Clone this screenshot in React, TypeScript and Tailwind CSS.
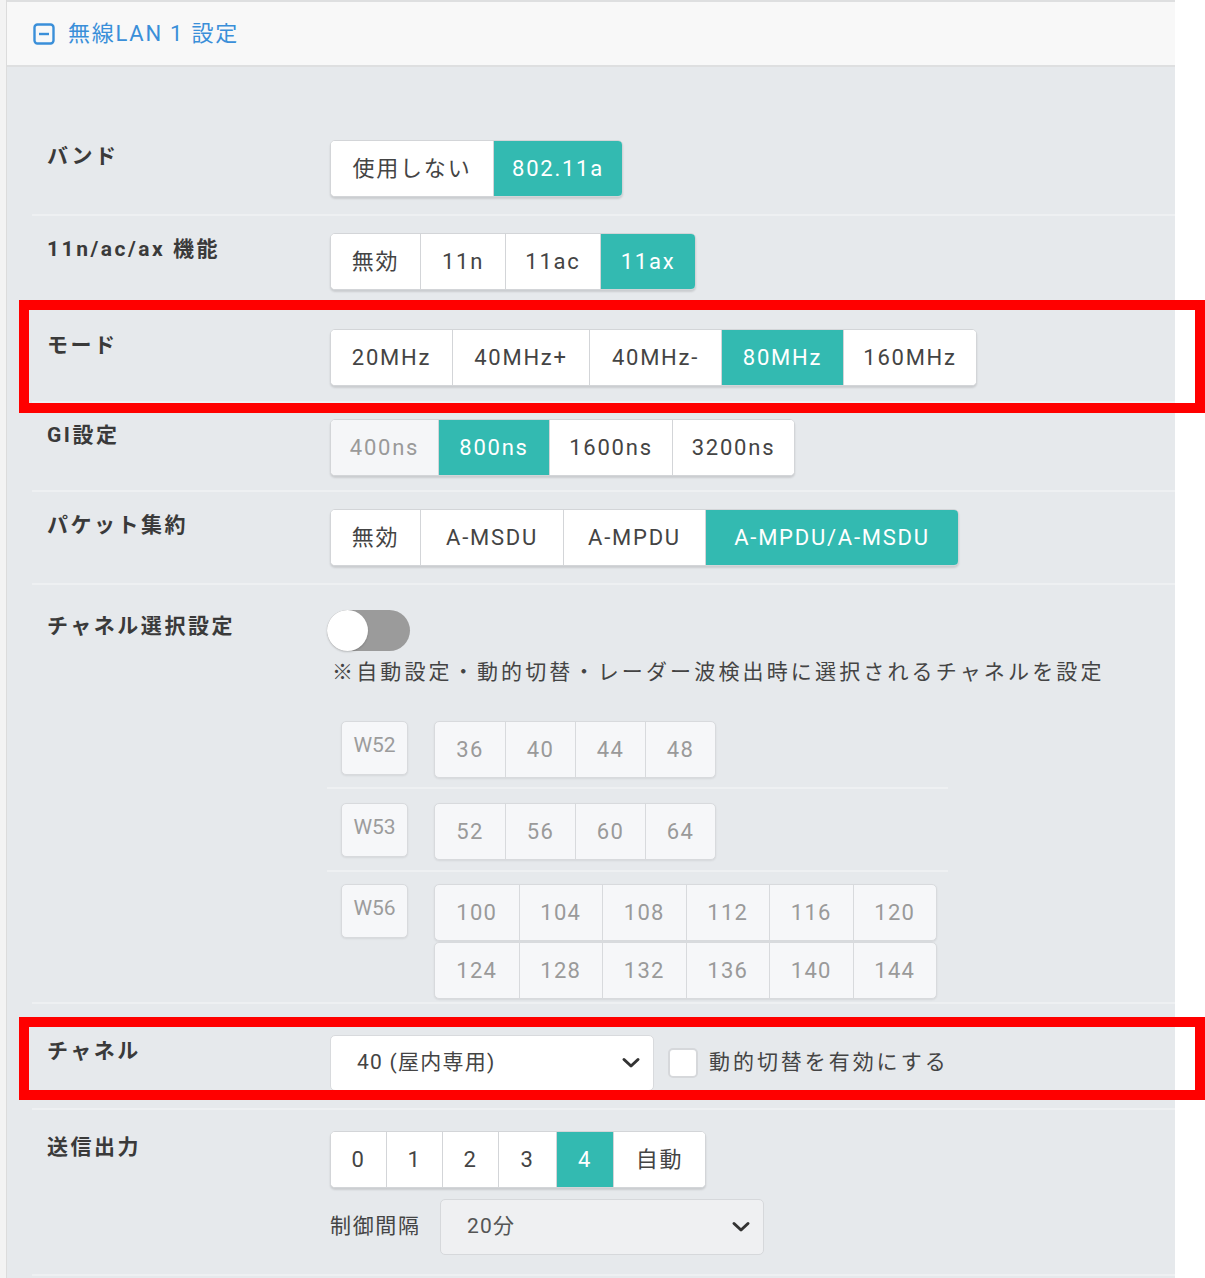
import type { ReactNode } from "react";

type Opt = { label: string; w: number; active?: boolean; disabled?: boolean };

const font = "font-['Roboto','Noto_Sans_CJK_JP',sans-serif]";

function Segmented({ options, h = 57 }: { options: Opt[]; h?: number }) {
  return (
    <div
      className="inline-flex overflow-hidden rounded-[5px] border border-[#d3d5d8] bg-white shadow-[0_2px_2px_rgba(0,0,0,0.12)]"
      style={{ height: h }}
    >
      {options.map((o, i) => (
        <div
          key={o.label}
          className={
            "flex items-center justify-center text-[22px] tracking-[0.08em] " +
            (i > 0 ? "border-l border-[#d3d5d8] " : "") +
            (o.active
              ? "bg-[#33bab1] text-white"
              : o.disabled
                ? "bg-[#f5f6f8] text-[#9a9a9a]"
                : "bg-white text-[#444]")
          }
          style={{ width: o.w }}
        >
          {o.label}
        </div>
      ))}
    </div>
  );
}

function Row({
  label,
  children,
  className = "",
}: {
  label: string;
  children: ReactNode;
  className?: string;
}) {
  return (
    <div className={"ml-[25px] flex border-b-2 border-[#eef0f2] " + className}>
      <div className="w-[298px] shrink-0 pl-[15px] pt-[1px] text-[21px] leading-[30px] font-bold tracking-[0.12em] text-[#3a3a3a]">
        {label}
      </div>
      <div className="flex-1">{children}</div>
    </div>
  );
}

function Chevron() {
  return (
    <svg width="20" height="14" viewBox="0 0 20 14" fill="none">
      <path d="M3 3.5 L10 10 L17 3.5" stroke="#333" strokeWidth="3" strokeLinecap="round" strokeLinejoin="round" />
    </svg>
  );
}

function ChannelGroup({ name, rows, w }: { name: string; rows: string[][]; w: number }) {
  return (
    <div className="flex items-start">
      <div className="ml-[14px] flex h-[54px] w-[67px] items-start justify-center rounded-[5px] border border-[#d8dadd] bg-[#f6f7f9] pt-[8px] text-[21px] leading-[30px] text-[#9c9c9c] shadow-[0_1px_2px_rgba(0,0,0,0.08)]">
        {name}
      </div>
      <div className="ml-[26px] flex flex-col gap-[1px]">
        {rows.map((r, i) => (
          <div
            key={i}
            className="flex h-[57px] overflow-hidden rounded-[5px] border border-[#d8dadd] bg-[#f6f7f9] shadow-[0_1px_2px_rgba(0,0,0,0.08)]"
          >
            {r.map((c, j) => (
              <div
                key={c}
                className={
                  "flex items-center justify-center text-[22px] tracking-[0.06em] text-[#9a9a9a] " +
                  (j > 0 ? "border-l border-[#d8dadd]" : "")
                }
                style={{ width: w }}
              >
                {c}
              </div>
            ))}
          </div>
        ))}
      </div>
    </div>
  );
}

export default function App() {
  return (
    <div className={"relative flex h-[1278px] w-[1205px] overflow-hidden bg-white " + font}>
      <div className="w-[7px] shrink-0 border-r border-[#dcdcdc] bg-[#f3f3f3]" />
      <div className="flex w-[1168px] shrink-0 flex-col bg-[#e6e9ec]">
        <div className="flex h-[67px] items-center border-b-2 border-t-2 border-[#dedfe0] bg-[#f8f8f8] pl-[26px]">
          <svg width="22" height="22" viewBox="0 0 22 22" fill="none">
            <rect x="1.5" y="1.5" width="19" height="19" rx="3" stroke="#3a8fd9" strokeWidth="2.4" />
            <path d="M6 11 H16" stroke="#3a8fd9" strokeWidth="2.4" />
          </svg>
          <span className="ml-[13px] text-[22px] tracking-[0.08em] text-[#3a8fd9]">無線LAN 1 設定</span>
        </div>

        <div className="pt-[56px]">
          <Row label="バンド" className="pb-[17px] pt-[17px]">
            <Segmented
              options={[
                { label: "使用しない", w: 162 },
                { label: "802.11a", w: 129, active: true },
              ]}
            />
          </Row>
          <Row label="11n/ac/ax 機能" className="pb-[18px] pt-[17px]">
            <Segmented
              options={[
                { label: "無効", w: 89 },
                { label: "11n", w: 85 },
                { label: "11ac", w: 95 },
                { label: "11ax", w: 95, active: true },
              ]}
            />
          </Row>
          <Row label="モード" className="pb-[15px] pt-[19px]">
            <Segmented
              options={[
                { label: "20MHz", w: 121 },
                { label: "40MHz+", w: 137 },
                { label: "40MHz-", w: 132 },
                { label: "80MHz", w: 122, active: true },
                { label: "160MHz", w: 133 },
              ]}
            />
          </Row>
          <Row label="GI設定" className="pb-[14px] pt-[16px]">
            <Segmented
              options={[
                { label: "400ns", w: 107, disabled: true },
                { label: "800ns", w: 111, active: true },
                { label: "1600ns", w: 123 },
                { label: "3200ns", w: 122 },
              ]}
            />
          </Row>
          <Row label="パケット集約" className="pb-[17px] pt-[17px]">
            <Segmented
              options={[
                { label: "無効", w: 89 },
                { label: "A-MSDU", w: 143 },
                { label: "A-MPDU", w: 142 },
                { label: "A-MPDU/A-MSDU", w: 253, active: true },
              ]}
            />
          </Row>
          <Row label="チャネル選択設定" className="pt-[25px]">
            <div className="-ml-[3px]">
              <div className="relative h-[41px] w-[83px] rounded-full bg-[#9b9b9b]">
                <div className="absolute left-0 top-0 h-[41px] w-[41px] rounded-full bg-white shadow-[0_1px_2px_rgba(0,0,0,0.2)]" />
              </div>
              <div className="mt-[6px] pl-[5px] text-[21px] leading-[30px] tracking-[0.15em] text-[#444]">
                ※自動設定・動的切替・レーダー波検出時に選択されるチャネルを設定
              </div>
              <div className="mt-[24px] w-[621px]">
                <div className="border-b-2 border-[#eef0f2] pb-[9px] pt-[10px]">
                  <ChannelGroup name="W52" w={70} rows={[["36", "40", "44", "48"]]} />
                </div>
                <div className="border-b-2 border-[#eef0f2] pb-[10px] pt-[14px]">
                  <ChannelGroup name="W53" w={70} rows={[["52", "56", "60", "64"]]} />
                </div>
                <div className="pb-[3px] pt-[12px]">
                  <ChannelGroup
                    name="W56"
                    w={83.5}
                    rows={[
                      ["100", "104", "108", "112", "116", "120"],
                      ["124", "128", "132", "136", "140", "144"],
                    ]}
                  />
                </div>
              </div>
            </div>
          </Row>
          <Row label="チャネル" className="pb-[17px] pt-[31px]">
            <div className="flex items-center">
              <div className="flex h-[56px] w-[324px] items-center justify-between rounded-[5px] border border-[#d8dadd] bg-white pl-[26px] pr-[12px] text-[21px] tracking-[0.06em] text-[#444]">
                <span>40 (屋内専用)</span>
                <Chevron />
              </div>
              <div className="ml-[14px] h-[30px] w-[30px] rounded-[5px] border-2 border-[#d6d8db] bg-white" />
              <span className="ml-[11px] text-[21px] tracking-[0.14em] text-[#444]">動的切替を有効にする</span>
            </div>
          </Row>
          <Row label="送信出力" className="pb-[19px] pt-[21px]">
            <Segmented
              options={[
                { label: "0", w: 55 },
                { label: "1", w: 56 },
                { label: "2", w: 56 },
                { label: "3", w: 58 },
                { label: "4", w: 57, active: true },
                { label: "自動", w: 92 },
              ]}
            />
            <div className="mt-[11px] flex items-center">
              <span className="w-[110px] text-[21px] tracking-[0.08em] text-[#444]">制御間隔</span>
              <div className="flex h-[56px] w-[324px] items-center justify-between rounded-[5px] border border-[#d6d8db] bg-[#eff0f2] pl-[26px] pr-[12px] text-[21px] tracking-[0.06em] text-[#555]">
                <span>20分</span>
                <Chevron />
              </div>
            </div>
          </Row>
        </div>
      </div>

      <div className="pointer-events-none absolute left-[19px] top-[300px] h-[113px] w-[1186px] border-[10px] border-[#ff0000]" />
      <div className="pointer-events-none absolute left-[19px] top-[1017px] h-[83px] w-[1186px] border-[10px] border-[#ff0000]" />
    </div>
  );
}
